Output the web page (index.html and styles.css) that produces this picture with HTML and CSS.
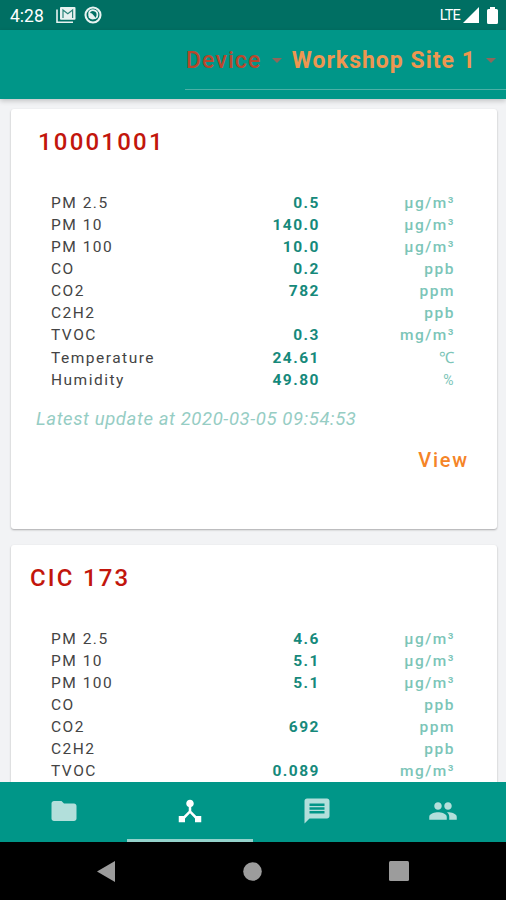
FILE: index.html
```html
<!DOCTYPE html>
<html lang="en">
  <head>
    <meta charset="utf-8">
    <title>Devices</title>
    <meta name="viewport" content="width=device-width, initial-scale=1">
    <link rel="stylesheet" href="styles.css">
  </head>
  <body>
    <div class="statusbar">
      <span class="clock">4:28</span>
      <svg class="mail" width="20" height="18" viewBox="0 0 20 18">
        <path d="M1 3.5V16.2H17" fill="none" stroke="#e8f3f1" stroke-width="1.6"/>
        <rect x="4" y="1" width="15.5" height="12.8" rx="1" fill="#e8f3f1"/>
        <path d="M7 12V4L11.8 7.8L16.6 4V12" fill="none" stroke="#2c8479" stroke-width="1.2"/>
      </svg>
      <svg class="sync" width="18" height="18" viewBox="0 0 18 18">
        <circle cx="9" cy="9" r="7.5" fill="none" stroke="#e8f3f1" stroke-width="2.1"/>
        <path d="M5 6.8A4.4 4.4 0 0 1 13.4 9A4.4 4.4 0 0 1 12.2 12" fill="none" stroke="#e8f3f1" stroke-width="1.7"/>
        <path d="M4.3 6.5L8 7.5L12.5 12.8L8.5 13.4A4.4 4.4 0 0 1 4.3 9.5Z" fill="#e8f3f1"/>
      </svg>
      <span class="network">LTE</span>
      <svg class="signal" width="16" height="16" viewBox="0 0 16 16"><path d="M0 16L16 0V16Z" fill="#fff"/></svg>
      <svg class="battery" width="11" height="17" viewBox="0 0 11 17"><path d="M3 0H8V2H9.5Q11 2 11 3.5V15.5Q11 17 9.5 17H1.5Q0 17 0 15.5V3.5Q0 2 1.5 2H3Z" fill="#fff"/></svg>
    </div>

    <header class="toolbar">
      <div class="pickers">
        <span class="picker device">Device</span>
        <svg class="arrow" width="10" height="5" viewBox="0 0 10 5"><path d="M0 0H10L5 5Z"/></svg>
        <span class="picker site">Workshop Site 1</span>
        <svg class="arrow" width="10" height="5" viewBox="0 0 10 5"><path d="M0 0H10L5 5Z"/></svg>
      </div>
    </header>

    <main>
      <section class="card">
        <h2 class="indent">10001001</h2>
        <div class="readings">
          <span>PM 2.5</span><b>0.5</b><i>µg/m³</i>
          <span>PM 10</span><b>140.0</b><i>µg/m³</i>
          <span>PM 100</span><b>10.0</b><i>µg/m³</i>
          <span>CO</span><b>0.2</b><i>ppb</i>
          <span>CO2</span><b>782</b><i>ppm</i>
          <span>C2H2</span><b></b><i>ppb</i>
          <span>TVOC</span><b>0.3</b><i>mg/m³</i>
          <span>Temperature</span><b>24.61</b><i class="thin">℃</i>
          <span>Humidity</span><b>49.80</b><i class="thin percent">%</i>
        </div>
        <p class="updated">Latest update at 2020-03-05 09:54:53</p>
        <a class="view">View</a>
      </section>

      <section class="card">
        <h2>CIC 173</h2>
        <div class="readings">
          <span>PM 2.5</span><b>4.6</b><i>µg/m³</i>
          <span>PM 10</span><b>5.1</b><i>µg/m³</i>
          <span>PM 100</span><b>5.1</b><i>µg/m³</i>
          <span>CO</span><b></b><i>ppb</i>
          <span>CO2</span><b>692</b><i>ppm</i>
          <span>C2H2</span><b></b><i>ppb</i>
          <span>TVOC</span><b>0.089</b><i>mg/m³</i>
        </div>
      </section>
    </main>

    <nav class="tabs">
      <div class="tab">
        <svg width="30" height="30" viewBox="0 0 24 24"><path d="M10 4H4c-1.1 0-1.99.9-1.99 2L2 18c0 1.1.9 2 2 2h16c1.1 0 2-.9 2-2V8c0-1.1-.9-2-2-2h-8l-2-2z"/></svg>
      </div>
      <div class="tab active">
        <svg width="30" height="30" viewBox="0 0 24 24"><path d="M17 16l-4-4V8.82C14.16 8.4 15 7.3 15 6c0-1.66-1.34-3-3-3S9 4.34 9 6c0 1.3.84 2.4 2 2.82V12l-4 4H3v5h5v-3.05l4-4.2 4 4.2V21h5v-5h-4z"/></svg>
      </div>
      <div class="tab">
        <svg width="30" height="30" viewBox="0 0 24 24"><path d="M20 2H4c-1.1 0-1.99.9-1.99 2L2 22l4-4h14c1.1 0 2-.9 2-2V4c0-1.1-.9-2-2-2zm-2 12H6v-2h12v2zm0-3H6V9h12v2zm0-3H6V6h12v2z"/></svg>
      </div>
      <div class="tab">
        <svg width="30" height="30" viewBox="0 0 24 24"><path d="M16 11c1.66 0 2.99-1.34 2.99-3S17.66 5 16 5s-3 1.34-3 3 1.34 3 3 3zm-8 0c1.66 0 2.99-1.34 2.99-3S9.66 5 8 5 5 6.34 5 8s1.34 3 3 3zm0 2c-2.33 0-7 1.17-7 3.5V19h14v-2.5c0-2.33-4.67-3.5-7-3.5zm8 0c-.29 0-.62.02-.97.05 1.16.84 1.97 1.97 1.97 3.45V19h6v-2.5c0-2.33-4.67-3.5-7-3.5z"/></svg>
      </div>
    </nav>

    <div class="navbar">
      <svg width="18" height="21" viewBox="0 0 18 21"><path d="M18 0V21L0 10.5Z"/></svg>
      <svg width="19" height="19" viewBox="0 0 19 19"><circle cx="9.5" cy="9.5" r="9.3"/></svg>
      <svg width="20" height="20" viewBox="0 0 20 20"><rect width="20" height="20" rx="1.5"/></svg>
    </div>
  </body>
</html>
```
FILE: styles.css
```css
* {
  box-sizing: border-box;
}

body {
  margin: 0;
  height: 900px;
  display: flex;
  flex-direction: column;
  overflow: hidden;
  font-family: Roboto, sans-serif;
  background: #f2f3f5;
}

.statusbar {
  height: 30px;
  flex: none;
  display: flex;
  align-items: center;
  padding: 0 8px 0 10px;
  background: #006f63;
  color: #fff;
}

.clock {
  width: 46px;
  padding-top: 1px;
  font-size: 17.5px;
}

.mail {
  margin-right: 8px;
}

.network {
  margin-left: auto;
  margin-right: 3px;
  font-size: 14.5px;
  letter-spacing: -0.8px;
}

.signal {
  margin-right: 8px;
}

.toolbar {
  position: relative;
  height: 69px;
  flex: none;
  padding-left: 185px;
  background: #009688;
  box-shadow: 0 2px 5px rgba(0, 0, 0, 0.2);
}

.pickers {
  height: 60px;
  display: flex;
  align-items: center;
  padding: 2px 0 0 1px;
  border-bottom: 1px solid #4db0a6;
}

.picker {
  font-size: 23px;
  font-weight: 700;
  letter-spacing: 1px;
  white-space: nowrap;
}

.device {
  width: 86px;
  font-weight: 500;
  letter-spacing: 1.1px;
  color: #b9472c;
}

.site {
  width: 195px;
  color: #ee9650;
}

.arrow {
  flex: none;
  margin-right: 10px;
  fill: #8f665a;
}

main {
  flex: 1;
  min-height: 0;
  overflow: hidden;
  padding: 10px 9px 0 11px;
}

.card {
  height: 420px;
  margin-bottom: 16px;
  padding: 19px 19px 0;
  display: flex;
  flex-direction: column;
  border-radius: 3px;
  background: #fff;
  box-shadow: 0 1px 2px rgba(0, 0, 0, 0.3);
}

h2 {
  margin: 0 0 35.6px;
  font-size: 24px;
  line-height: 28px;
  font-weight: 500;
  letter-spacing: 2.2px;
  color: #c2160c;
}

h2.indent {
  padding-left: 8px;
}

.readings {
  display: grid;
  grid-template-columns: 130px 139px 135px;
  grid-auto-rows: 22.15px;
  padding-left: 21px;
  font-size: 15.5px;
  line-height: 22px;
  letter-spacing: 1.5px;
  color: #444;
}

.readings b {
  text-align: right;
  font-weight: 700;
  color: #16897b;
}

.readings i {
  text-align: right;
  font-style: normal;
  font-weight: 500;
  color: #7cc5b8;
}

.readings .thin {
  font-weight: 400;
}

.readings .percent {
  font-size: 14px;
}

.updated {
  margin: 17.4px 0 0 6px;
  font-size: 18.5px;
  line-height: 22px;
  font-style: italic;
  letter-spacing: 0.6px;
  color: #96cdc4;
}

.view {
  align-self: flex-end;
  margin: 18px 9px 0 0;
  font-size: 20px;
  line-height: 24px;
  font-weight: 500;
  letter-spacing: 1.8px;
  color: #f58427;
}

.tabs {
  height: 60px;
  flex: none;
  display: grid;
  grid-template-columns: repeat(4, 1fr);
  background: #009688;
  fill: #b2dfdb;
}

.tab {
  display: flex;
  justify-content: center;
  padding: 14px 0 0 1px;
  border-bottom: 3px solid transparent;
}

.tab.active {
  fill: #fff;
  border-color: #94d2cb;
}

.navbar {
  height: 58px;
  flex: none;
  display: flex;
  align-items: center;
  justify-content: space-between;
  padding: 0 97px;
  background: #000;
  fill: #9c9c9c;
}
```
